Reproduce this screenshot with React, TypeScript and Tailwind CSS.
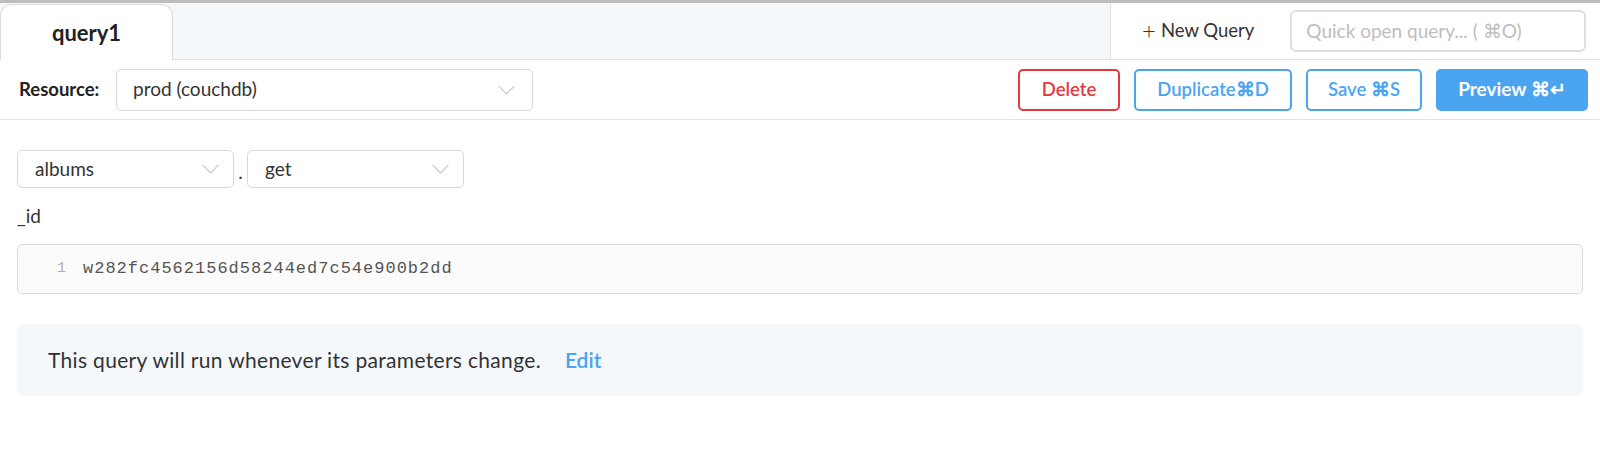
const font = { fontFamily: "Lato, 'Open Sans', sans-serif" };

const Chevron = ({ className }: { className?: string }) => (
  <svg width="17" height="10" viewBox="0 0 17 10" fill="none" className={className}>
    <polyline points="0.5,0.8 8.5,9 16.5,0.8" stroke="#c6c6c6" strokeWidth="1.1" />
  </svg>
);

const Select = ({ label, w }: { label: string; w: string }) => (
  <div className={`${w} h-[38px] flex items-center justify-between border border-[#d9d9d9] rounded-[5px] pl-[17px] pr-[14px] bg-white`}>
    <span className="text-[19px] text-[#333]">{label}</span>
    <Chevron />
  </div>
);

export default function App() {
  return (
    <div className="w-[1600px] h-[451px] bg-white overflow-hidden" style={font}>
      {/* tab bar */}
      <div className="border-t-[3px] border-[#bdbdbd] h-[60px] bg-[#f5f8fb] border-b border-b-[#e1e1e1] flex">
        <div className="flex-1 flex items-end">
          <div className="w-[173px] h-[56px] -mb-px bg-white border border-b-0 border-[#dcdcdc] rounded-t-[12px] flex items-center justify-center">
            <span className="text-[22px] font-bold text-[#222]">query1</span>
          </div>
        </div>
        <div className="w-[490px] bg-white border-l border-[#e1e1e1] flex items-center pl-[31px] gap-[36px]">
          <span className="text-[18.5px] text-[#333] flex items-center gap-[5px]">
            <span className="text-[24px] font-light leading-none -mt-[2px]">+</span>New Query
          </span>
          <div className="w-[296px] h-[42px] border-2 border-[#dedede] rounded-[6px] flex items-center px-[14px] text-[19px] text-[#bdbdbd]">
            Quick open query... ( ⌘O)
          </div>
        </div>
      </div>

      {/* resource row */}
      <div className="h-[60px] border-b border-[#e1e1e1] flex items-center pl-[19px] pr-[12px]">
        <span className="text-[18.5px] font-bold text-[#222] w-[97px]">Resource:</span>
        <div className="w-[417px] h-[42px] flex items-center justify-between border border-[#d9d9d9] rounded-[5px] pl-[16px] pr-[17px]">
          <span className="text-[19px] text-[#333]">prod (couchdb)</span>
          <Chevron />
        </div>
        <div className="flex-1" />
        <div className="flex gap-[14px] text-[18.5px] font-semibold">
          <button className="w-[102px] h-[42px] border-2 border-[#e2393f] rounded-[5px] text-[#e2393f]">Delete</button>
          <button className="w-[158px] h-[42px] border-2 border-[#4aa4ef] rounded-[5px] text-[#4aa4ef]">Duplicate⌘D</button>
          <button className="w-[116px] h-[42px] border-2 border-[#4aa4ef] rounded-[5px] text-[#4aa4ef]">Save ⌘S</button>
          <button className="w-[152px] h-[42px] bg-[#4aa4ef] rounded-[5px] text-white font-bold text-[19px]">Preview ⌘↵</button>
        </div>
      </div>

      {/* content */}
      <div className="px-[17px] pt-[30px]">
        <div className="flex items-center">
          <Select label="albums" w="w-[217px]" />
          <span className="w-[13px] text-center text-[19px] text-[#333] mt-[6px]">.</span>
          <Select label="get" w="w-[217px]" />
        </div>
        <div className="text-[19px] text-[#333] mt-[16px] leading-[24px]">_id</div>
        <div className="mt-[16px] h-[50px] bg-[#fbfbfb] border border-[#dcdcdc] rounded-[5px] flex items-center" style={{ fontFamily: "'Liberation Mono', monospace" }}>
          <span className="w-[65px] text-right text-[15px] text-[#b0b0b0] pr-[17px]">1</span>
          <span className="text-[17px] text-[#555] tracking-[1px]">w282fc4562156d58244ed7c54e900b2dd</span>
        </div>
        <div className="mt-[30px] h-[72px] bg-[#f5f8fb] rounded-[6px] flex items-center pl-[31px]">
          <span className="text-[21px] text-[#333] tracking-[0.32px]">This query will run whenever its parameters change.</span>
          <span className="text-[21px] font-semibold text-[#4aa4ef] ml-[24px]">Edit</span>
        </div>
      </div>
    </div>
  );
}
